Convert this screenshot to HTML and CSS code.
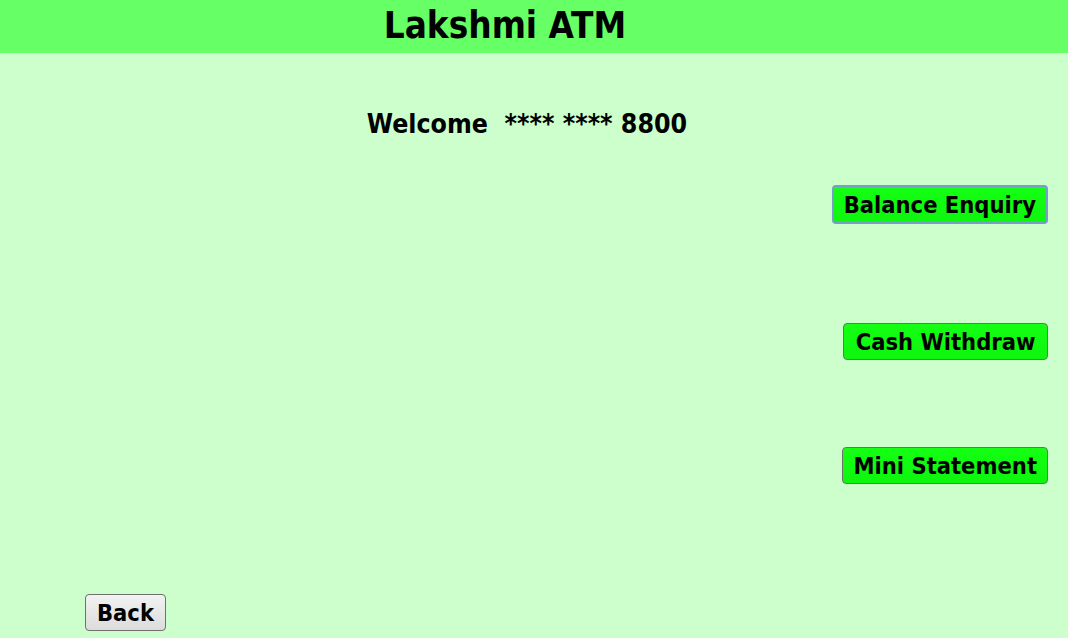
FILE: index.html
```html
<!DOCTYPE html>
<html>
<head>
<meta charset="utf-8">
<link rel="stylesheet" href="styles.css">
</head>
<body>
<header class="topbar"><h1 class="title">Lakshmi ATM</h1></header>
<main class="screen">
  <p class="welcome">Welcome&nbsp; **** **** 8800</p>
  <div class="actions">
    <button class="btn btn-green btn-focus">Balance Enquiry</button>
    <button class="btn btn-green btn-cash">Cash Withdraw</button>
    <button class="btn btn-green btn-mini">Mini Statement</button>
  </div>
  <div class="footer">
    <button class="btn btn-back">Back</button>
  </div>
</main>
</body>
</html>
```
FILE: styles.css
```css
html, body {
  margin: 0;
  padding: 0;
  height: 100%;
}
body {
  background: #ccffcc;
  font-family: "DejaVu Sans Condensed", "DejaVu Sans", sans-serif;
  font-weight: bold;
  color: #000;
  overflow: hidden;
}
.topbar {
  background: #66ff66;
  height: 53px;
  display: flex;
  align-items: center;
  justify-content: center;
  padding-right: 58px;
}
.title {
  margin: 0;
  font-size: 36.5px;
  font-weight: bold;
  line-height: 1;
}
.screen {
  display: flex;
  flex-direction: column;
  height: 585px;
}
.welcome {
  margin: 56px 0 0 0;
  text-align: center;
  padding-right: 14px;
  font-size: 26.5px;
  line-height: 30px;
}
.actions {
  display: flex;
  flex-direction: column;
  align-items: flex-end;
  padding-right: 20px;
  margin-top: 46px;
}
.btn {
  font-family: inherit;
  font-weight: bold;
  font-size: 23.5px;
  color: #000;
  border-radius: 4px;
  cursor: pointer;
}
.btn-green {
  background: linear-gradient(#14ff14, #0ef50e);
  border: 1px solid #6f6f6f;
  height: 37px;
  padding: 0 10px;
}
.btn-focus {
  border: 2px solid #7a9ccc;
  height: 39px;
}
.btn-cash { margin-top: 99px; padding: 0 11.5px; }
.btn-mini { margin-top: 87px; }
.footer {
  margin-top: auto;
  padding: 0 0 7px 85px;
}
.btn-back {
  background: linear-gradient(#f2f2f2, #dcdcdc);
  border: 1px solid #707070;
  height: 37px;
  padding: 0 11px;
}
```
